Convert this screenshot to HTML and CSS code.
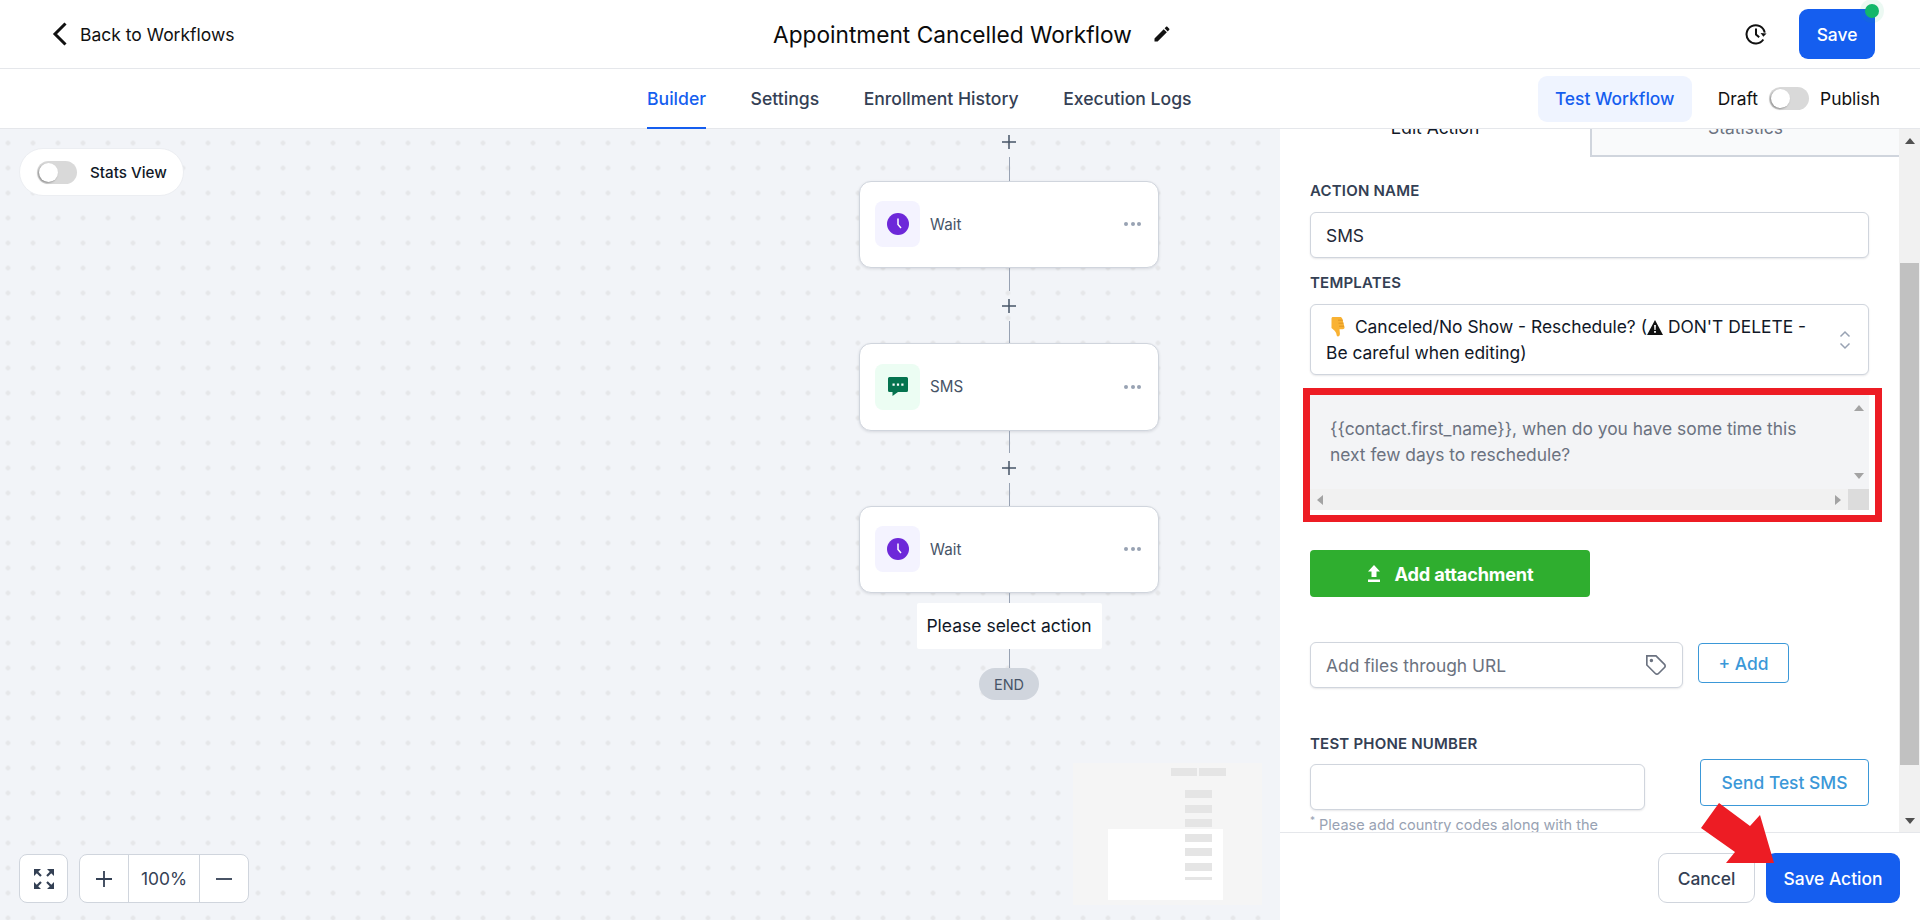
FILE: index.html
```html
<!DOCTYPE html>
<html lang="en">
<head>
  <meta charset="UTF-8" />
  <meta name="viewport" content="width=device-width, initial-scale=1.0" />
  <title>Appointment Cancelled Workflow</title>
  <link rel="stylesheet" href="styles.css">
</head>
<body>
  <header class="topbar">
    <a class="back-link">
      <svg class="back-icon" viewBox="0 0 14 24"><path d="M13 1.500 2.500 12 13 22.500" /></svg>
      Back to Workflows
    </a>
    <div class="title-wrap">
      <h1 class="title">Appointment Cancelled Workflow</h1>
      <svg class="pencil" viewBox="0 0 24 24"><path d="M20.710 7.040c.39-.39.39-1.040 0-1.410l-2.340-2.340c-.37-.39-1.020-.39-1.410 0l-1.840 1.830 3.750 3.750M3 17.250V21h3.750L17.810 9.930l-3.750-3.750L3 17.250z" /></svg>
    </div>
    <div class="top-actions">
      <svg class="history" viewBox="0 0 24 24"><path d="M21.500 10.500A10 10 0 1 0 20 18" /><path d="M12 6v6.500l3.500 3" /><path class="history-head" d="M23.500 11.500 20 15l-3-4z" /></svg>
      <button class="btn-primary btn-save">Save<span class="status-dot"></span></button>
    </div>
  </header>

  <nav class="tabbar">
    <a class="nav-tab active">Builder</a>
    <a class="nav-tab">Settings</a>
    <a class="nav-tab">Enrollment History</a>
    <a class="nav-tab">Execution Logs</a>
    <div class="tabbar-right">
      <button class="btn-test">Test Workflow</button>
      <span class="publish-label">Draft</span>
      <span class="toggle"></span>
      <span class="publish-label">Publish</span>
    </div>
  </nav>

  <div class="workspace">
    <section class="canvas">
      <div class="stats-pill">
        <span class="toggle"></span>
        Stats View
      </div>

      <div class="flow">
        <div class="add-step first"><svg viewBox="0 0 14 14"><path d="M7 0v14M0 7h14" /></svg></div>
        <div class="line line-top"></div>

        <div class="node">
          <span class="node-icon wait">
            <svg viewBox="0 0 22 22"><circle cx="11" cy="11" r="11" /><path d="M11 5.500V11.500L14 15" /></svg>
          </span>
          <span class="node-name">Wait</span>
          <span class="node-menu"><i></i><i></i><i></i></span>
        </div>

        <div class="line"></div>
        <div class="add-step"><svg viewBox="0 0 14 14"><path d="M7 0v14M0 7h14" /></svg></div>
        <div class="line"></div>

        <div class="node">
          <span class="node-icon sms">
            <svg viewBox="0 0 20 20"><path d="M1.500 0h17A1.500 1.500 0 0 1 20 1.500v12a1.500 1.500 0 0 1-1.500 1.500H10l-5.500 4v-4h-3A1.500 1.500 0 0 1 0 13.500v-12A1.500 1.500 0 0 1 1.500 0z" /><path class="sms-dots" d="M4.500 6.500h2.200v2.200H4.500zM8.900 6.500h2.200v2.200H8.900zM13.300 6.500h2.200v2.200h-2.200z" /></svg>
          </span>
          <span class="node-name">SMS</span>
          <span class="node-menu"><i></i><i></i><i></i></span>
        </div>

        <div class="line"></div>
        <div class="add-step"><svg viewBox="0 0 14 14"><path d="M7 0v14M0 7h14" /></svg></div>
        <div class="line"></div>

        <div class="node">
          <span class="node-icon wait">
            <svg viewBox="0 0 22 22"><circle cx="11" cy="11" r="11" /><path d="M11 5.500V11.500L14 15" /></svg>
          </span>
          <span class="node-name">Wait</span>
          <span class="node-menu"><i></i><i></i><i></i></span>
        </div>

        <div class="line line-short"></div>
        <div class="select-action">Please select action</div>
        <div class="line line-end"></div>
        <div class="end-pill">END</div>
      </div>

      <div class="canvas-controls">
        <button class="ctrl-btn">
          <svg class="fit-icon" viewBox="0 0 22 22"><path d="M1 1h7L1 8zM21 1v7l-7-7zM1 21v-7l7 7zM21 21h-7l7-7z" /><path class="fit-lines" d="M3 3l5 5M19 3l-5 5M3 19l5-5M19 19l-5-5" /></svg>
        </button>
        <div class="zoom-group">
          <button class="zoom-btn"><svg viewBox="0 0 18 18"><path d="M9 1v16M1 9h16" /></svg></button>
          <span class="zoom-value">100%</span>
          <button class="zoom-btn"><svg viewBox="0 0 18 18"><path d="M1 9h16" /></svg></button>
        </div>
      </div>

      <svg class="minimap" viewBox="0 0 189 142">
        <rect class="mini-bg" width="189" height="142" />
        <rect class="mini-view" x="35" y="66" width="115" height="71" />
        <rect class="mini-node" x="98" y="5" width="26" height="8" />
        <rect class="mini-node" x="126" y="5" width="27" height="8" />
        <rect class="mini-node" x="112" y="27" width="27" height="8" />
        <rect class="mini-node" x="112" y="42" width="27" height="8" />
        <rect class="mini-node" x="112" y="56" width="27" height="8" />
        <rect class="mini-node" x="112" y="71" width="27" height="8" />
        <rect class="mini-node" x="112" y="85" width="27" height="8" />
        <rect class="mini-node" x="112" y="100" width="27" height="8" />
        <rect class="mini-node" x="112" y="114" width="27" height="3" />
      </svg>
    </section>

    <aside class="panel">
      <div class="panel-scroll">
        <div class="panel-body">
          <div class="panel-tabs">
            <div class="panel-tab current">Edit Action</div>
            <div class="panel-tab">Statistics</div>
          </div>

          <form class="action-form">
            <label class="field-label">Action Name</label>
            <input class="text-input" type="text" value="SMS" />

            <label class="field-label templates-label">Templates</label>
            <div class="template-select">
              <div class="template-text">
                <svg class="thumb" viewBox="0 0 16 20"><path d="M4 0h7c1.200 0 2 .6 2.200 1.500L15.500 10c.3 1.300-.5 2.200-1.800 2.200H10.500l.4 4.300c.1 1.800-.8 3-2 3-.8 0-1.200-.6-1.300-1.400-.3-2-1-3.300-2.200-4.500L2.500 11V1.500C2.500.6 3.100 0 4 0z" /><path class="thumb-lines" d="M9 3.200h5M9.500 6.200h5M10 9.200h5" /></svg>
                Canceled/No Show - Reschedule? (<svg class="warn" viewBox="0 0 16 15"><path d="M8 0 16 15H0z" /><path class="warn-mark" d="M7.100 5h1.800l-.3 5H7.400zM7.100 11h1.800v1.800H7.100z" /></svg> DON'T DELETE - Be careful when editing)
              </div>
              <svg class="updown" viewBox="0 0 12 20"><path d="M1.500 6.500 6 2l4.500 4.500M1.500 13.500 6 18l4.500-4.500" /></svg>
            </div>

            <div class="highlight-box">
              <div class="message-box">
                <div class="message-text">{{contact.first_name}}, when do you have some time this next few days to reschedule?</div>
                <div class="mini-scroll vertical"><span class="arrow up"></span><span class="arrow down"></span></div>
                <div class="mini-scroll horizontal"><span class="arrow left"></span><span class="arrow right"></span></div>
                <div class="scroll-corner"></div>
              </div>
            </div>

            <button type="button" class="btn-attach">
              <svg viewBox="0 0 14 17"><path d="M4.500 12V6.500H1L7 0l6 6.500H9.500V12zM1 14.500h12V17H1z" /></svg>
              Add attachment
            </button>

            <div class="url-row">
              <div class="url-input">
                <input class="text-input" type="text" placeholder="Add files through URL" />
                <svg class="tag-icon" viewBox="0 0 24 24"><path d="M12 2H2v10l9.290 9.290c.94.94 2.480.94 3.420 0l6.580-6.580c.94-.94.94-2.480 0-3.420L12 2Z" /><circle cx="7" cy="7" r="1" /></svg>
              </div>
              <button type="button" class="btn-outline btn-add">+ Add</button>
            </div>

            <div class="test-row">
              <div class="test-col">
                <label class="field-label test-label">Test Phone Number</label>
                <input class="text-input" type="text" />
                <p class="field-note"><sup>*</sup> Please add country codes along with the phone number</p>
              </div>
              <button type="button" class="btn-outline btn-send">Send Test SMS</button>
            </div>
          </form>
        </div>

        <div class="page-scroll">
          <span class="arrow up dark"></span>
          <div class="page-thumb"></div>
          <span class="arrow down dark"></span>
        </div>
      </div>

      <footer class="panel-footer">
        <button class="btn-cancel">Cancel</button>
        <button class="btn-primary btn-save-action">Save Action</button>
      </footer>
    </aside>
  </div>

  <!-- annotation drawn over the screenshot -->
  <svg class="red-arrow" viewBox="0 0 1920 920"><polygon points="1774,863 1760,815 1750,826 1719,803 1701,828 1735,852 1726,863" /></svg>
</body>
</html>
```

FILE: styles.css
```css
* { box-sizing: border-box; }
html, body { margin: 0; height: 100%; }
body { width: 1920px; height: 920px; overflow: hidden; font-family: Inter, "Noto Sans", sans-serif; font-size: 17.400px; color: #111827; background: #fff; position: relative; }
button, input { font-family: inherit; }
button { cursor: pointer; }

/* top bar */
.topbar { height: 69px; border-bottom: 1px solid #e5e7eb; display: flex; align-items: center; padding: 0 45px 0 52px; }
.back-link { display: flex; align-items: center; gap: 13px; font-size: 17.500px; color: #111; width: 721px; }
.back-icon { width: 15px; height: 24px; fill: none; stroke: #111; stroke-width: 3; }
.title-wrap { display: flex; align-items: center; gap: 20px; }
.title { margin: 0; font-size: 22.700px; font-weight: 400; color: #0b0b0b; }
.pencil { width: 20px; height: 20px; fill: #111; }
.top-actions { margin-left: auto; display: flex; align-items: center; gap: 32px; }
.history { width: 22px; height: 22px; fill: none; stroke: #111; stroke-width: 2.200; }
.history-head { fill: #111; stroke: none; }
.btn-primary { background: #155eef; color: #fff; border: none; border-radius: 9px; font-size: 17.400px; font-weight: 500; }
.btn-save { position: relative; width: 76px; height: 50px; }
.status-dot { position: absolute; top: -5px; right: -4px; width: 14px; height: 14px; border-radius: 50%; background: #12b76a; box-shadow: 0 0 0 5px rgba(18, 183, 106, 0.08); }

/* second bar */
.tabbar { height: 60px; border-bottom: 1px solid #e5e7eb; display: flex; align-items: stretch; padding: 0 40px 0 647px; gap: 44.500px; }
.nav-tab { display: flex; align-items: center; font-size: 17.600px; font-weight: 450; color: #344054; border-bottom: 2px solid transparent; margin-bottom: -1px; padding-top: 1px; }
.nav-tab.active { color: #155eef; border-bottom-color: #155eef; }
.tabbar-right { margin-left: auto; display: flex; align-items: center; }
.btn-test { width: 154px; height: 46px; margin-right: 26px; border: none; border-radius: 9px; background: #eff4ff; color: #155eef; font-size: 17.400px; font-weight: 500; }
.publish-label { font-size: 17.400px; color: #111; }
.toggle { display: inline-block; flex: none; position: relative; width: 40px; height: 23px; border-radius: 12px; background: #d9d9d9; }
.toggle::before { content: ""; position: absolute; left: 2px; top: 2px; width: 19px; height: 19px; border-radius: 50%; background: #fff; box-shadow: -1px 1px 2px rgba(0, 0, 0, 0.35); }
.tabbar-right .toggle { margin: 0 11px; }

/* workspace */
.workspace { display: flex; height: 791px; }
.canvas { width: 1280px; position: relative; overflow: hidden; background-color: #f2f4f8; background-image: radial-gradient(circle, #e6e7e9 2px, transparent 2.500px); background-size: 25px 25px; background-position: -4.500px 1.500px; }
.stats-pill { position: absolute; left: 19px; top: 19px; width: 165px; height: 48px; padding-left: 17px; display: flex; align-items: center; gap: 13px; background: #fff; border: 1px solid #eceef2; border-radius: 24px; font-size: 15.200px; font-weight: 500; color: #111827; }

.flow { display: flex; flex-direction: column; align-items: center; width: 300px; margin: -2.500px 0 0 859px; }
.add-step { height: 30px; display: flex; align-items: center; justify-content: center; }
.add-step svg { width: 14px; height: 14px; stroke: #475467; stroke-width: 1.500; fill: none; }
.line { width: 1px; height: 22.500px; background: #98a2b3; }
.line-top { height: 24px; }
.line-short { height: 9.500px; }
.line-end { height: 19.500px; }
.node { width: 300px; height: 87.500px; flex: none; display: flex; align-items: center; padding: 0 17px 0 15px; background: #fff; border: 1px solid #d0d5dd; border-radius: 12px; box-shadow: 0 1px 3px rgba(16, 24, 40, 0.12); }
.node-icon { width: 45px; height: 46px; border-radius: 8px; display: flex; align-items: center; justify-content: center; margin-right: 10px; }
.node-icon.wait { background: #f4f3ff; }
.node-icon.wait svg { width: 22px; height: 22px; }
.node-icon.wait circle { fill: #6d28d9; }
.node-icon.wait path { fill: none; stroke: #fff; stroke-width: 1.500; }
.node-icon.sms { background: #ecfdf3; }
.node-icon.sms svg { width: 20px; height: 20px; fill: #05734f; }
.sms-dots { fill: #fff; }
.node-name { font-size: 15.200px; color: #475467; }
.node-menu { margin-left: auto; display: flex; gap: 2.500px; }
.node-menu i { width: 4px; height: 4px; border-radius: 50%; background: #98a2b3; }
.select-action { width: 185px; height: 46px; flex: none; display: flex; align-items: center; justify-content: center; background: #fff; font-size: 17.500px; color: #111827; border-radius: 2px; }
.end-pill { width: 60px; height: 32px; flex: none; display: flex; align-items: center; justify-content: center; border-radius: 16px; background: #d0d5dd; color: #475467; font-size: 14.500px; }

.canvas-controls { position: absolute; left: 19px; top: 725px; display: flex; gap: 11px; }
.ctrl-btn { width: 49px; height: 49px; padding: 0; display: flex; align-items: center; justify-content: center; background: #fff; border: 1px solid #d0d5dd; border-radius: 8px; }
.fit-icon { width: 22px; height: 22px; fill: #344054; }
.fit-lines { fill: none; stroke: #344054; stroke-width: 2.200; }
.zoom-group { display: flex; height: 49px; background: #fff; border: 1px solid #d0d5dd; border-radius: 8px; }
.zoom-btn { width: 48px; padding: 0; display: flex; align-items: center; justify-content: center; background: none; border: none; }
.zoom-btn svg { width: 18px; height: 18px; fill: none; stroke: #344054; stroke-width: 1.800; }
.zoom-value { width: 72px; display: flex; align-items: center; justify-content: center; border-left: 1px solid #d0d5dd; border-right: 1px solid #d0d5dd; font-size: 17.400px; color: #344054; }
.minimap { position: absolute; left: 1073px; top: 634px; width: 189px; height: 142px; }
.mini-bg { fill: #f5f5f5; }
.mini-view { fill: #fff; }
.mini-node { fill: #e5e5e5; }

/* right panel */
.panel { width: 640px; display: flex; flex-direction: column; background: #fff; overflow: hidden; }
.panel-scroll { flex: 1; min-height: 0; display: flex; }
.panel-body { width: 619px; overflow: hidden; }
.panel-tabs { display: flex; height: 52px; margin-top: -24px; }
.panel-tab { flex: 1; display: flex; align-items: center; justify-content: center; padding-bottom: 6px; font-size: 17.400px; color: #6b7280; background: #f9fafb; border-left: 2px solid #d0d5dd; border-bottom: 2px solid #d0d5dd; }
.panel-tab.current { color: #111827; background: #fff; border: none; padding-bottom: 8px; flex: none; width: 310px; }
.action-form { padding: 24px 30px 0; }
.field-label { display: block; height: 20px; line-height: 20px; font-size: 15px; font-weight: 600; letter-spacing: 0.2px; text-transform: uppercase; color: #344054; margin-bottom: 11px; }
.templates-label { margin-top: 15px; }
.test-label { margin-bottom: 10px; }
.text-input { display: block; width: 100%; height: 46px; padding: 0 15px; font-size: 17.400px; color: #1f2937; background: #fff; border: 1px solid #d0d5dd; border-radius: 6px; box-shadow: 0 1px 2px rgba(16, 24, 40, 0.1); outline: none; }
.text-input::placeholder { color: #6b7280; opacity: 1; }
.template-select { height: 71px; display: flex; align-items: center; padding: 0 15px; background: #fff; border: 1px solid #d0d5dd; border-radius: 6px; box-shadow: 0 1px 2px rgba(16, 24, 40, 0.1); }
.template-text { width: 490px; font-size: 17.400px; line-height: 26px; color: #111827; }
.thumb { width: 16px; height: 20px; margin: 0 5px 0 3px; vertical-align: -4px; fill: #f9b233; }
.thumb-lines { fill: none; stroke: #d98f1f; stroke-width: 0.800; }
.warn { width: 16px; height: 15px; vertical-align: -2px; fill: #111; }
.warn-mark { fill: #fff; }
.updown { width: 12px; height: 20px; margin-left: auto; margin-right: 2px; fill: none; stroke: #98a2b3; stroke-width: 1.500; }

.highlight-box { margin: 13px -12.500px 0 -7px; border: 7px solid #ed1c24; padding: 0 5.500px 5px 0; background: #fff; }
.message-box { display: grid; grid-template-columns: 1fr 21px; grid-template-rows: 94px 21px; background: #f3f4f6; }
.message-text { padding: 21px 40px 0 20px; font-size: 17.400px; line-height: 26px; color: #6b7280; }
.mini-scroll { display: flex; align-items: center; justify-content: space-between; background: #f1f1f1; }
.mini-scroll.vertical { flex-direction: column; padding: 10px 0 10px; background: #f3f4f6; }
.mini-scroll.horizontal { padding: 0 7px; }
.scroll-corner { background: #dcdcdc; }
.arrow { display: block; width: 0; height: 0; border: 5px solid transparent; }
.arrow.up { border-top: 0; border-bottom: 6px solid #a3a3a3; }
.arrow.down { border-bottom: 0; border-top: 6px solid #a3a3a3; }
.arrow.left { border-left: 0; border-right: 6px solid #a3a3a3; }
.arrow.right { border-right: 0; border-left: 6px solid #a3a3a3; }
.arrow.up.dark { border-bottom-color: #505050; }
.arrow.down.dark { border-top-color: #505050; }

.btn-attach { display: flex; align-items: center; justify-content: center; gap: 14px; width: 280px; height: 47px; margin-top: 28px; border: none; border-radius: 4px; background: #2fae2f; color: #fff; font-size: 18.200px; font-weight: 700; letter-spacing: -0.200px; }
.btn-attach svg { width: 14px; height: 17px; fill: #fff; }
.url-row { display: flex; align-items: flex-start; gap: 15px; margin-top: 45px; }
.url-input { position: relative; width: 373px; }
.tag-icon { position: absolute; right: 16px; top: 12px; width: 22px; height: 22px; fill: none; stroke: #6b7280; stroke-width: 1.800; }
.btn-outline { background: #fff; border: 1px solid #3b98d8; border-radius: 4px; color: #3b98d8; font-size: 17.400px; font-weight: 500; padding: 0; }
.btn-add { width: 91px; height: 40px; margin-top: 1px; }
.test-row { display: flex; justify-content: space-between; align-items: flex-start; margin-top: 46px; }
.test-col { width: 335px; }
.btn-send { width: 169px; height: 47px; margin-top: 25px; }
.field-note { margin: 6px 0 0; font-size: 14.500px; line-height: 18px; color: #98a2b3; }
.field-note sup { font-size: 10px; line-height: 0; }

.page-scroll { width: 21px; height: 100%; display: flex; flex-direction: column; align-items: center; background: #f1f1f1; padding: 9px 0 8px; }
.page-thumb { width: 19px; height: 502px; margin-top: 119px; background: #c1c1c1; }
.page-scroll .arrow.down { margin-top: auto; }

.panel-footer { height: 88px; flex: none; display: flex; justify-content: flex-end; gap: 11px; padding: 20px 20px 0 0; border-top: 1px solid #e5e7eb; background: #fff; }
.btn-cancel { width: 97px; height: 50px; background: #fff; border: 1px solid #d0d5dd; border-radius: 9px; font-size: 17.400px; font-weight: 500; color: #344054; }
.btn-save-action { width: 134px; height: 50px; }

.red-arrow { position: absolute; left: 0; top: 0; width: 1920px; height: 920px; pointer-events: none; fill: #ed1c24; }
```
